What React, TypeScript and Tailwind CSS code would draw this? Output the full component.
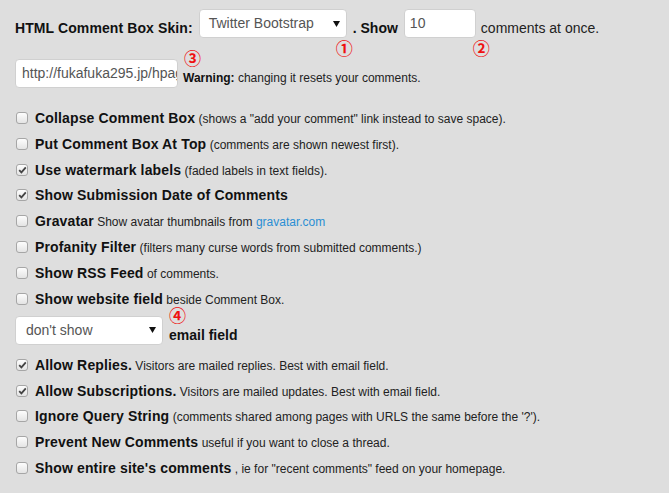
import React from "react";

const Check = ({ checked }: { checked?: boolean }) => (
  <span className="relative flex h-[12px] w-[12px] shrink-0 items-center justify-center rounded-[3px] border border-[#a6a6a6] bg-gradient-to-b from-[#fdfdfd] to-[#e4e4e4]">
    {checked && (
      <svg width="9" height="8" viewBox="0 0 9 8" className="block">
        <path d="M1.2 4.2 L3.4 6.4 L7.8 1.4" fill="none" stroke="#444" strokeWidth="1.8" />
      </svg>
    )}
  </span>
);

const Arrow = () => (
  <svg width="7" height="6" viewBox="0 0 7 6" className="block">
    <path d="M0 0 H7 L3.5 6 Z" fill="#111" />
  </svg>
);

const Circ = ({ n, className }: { n: string; className: string }) => (
  <span
    className={"absolute text-[17px] font-bold leading-none text-[#ee1111] " + className}
    style={{ fontFamily: '"Noto Sans CJK JP", "DejaVu Sans", sans-serif' }}
  >
    {n}
  </span>
);

type Row = { label: string; desc?: React.ReactNode; checked?: boolean };

const rows1: Row[] = [
  { label: "Collapse Comment Box", desc: '(shows a "add your comment" link instead to save space).' },
  { label: "Put Comment Box At Top", desc: "(comments are shown newest first)." },
  { label: "Use watermark labels", desc: "(faded labels in text fields).", checked: true },
  { label: "Show Submission Date of Comments", checked: true },
  {
    label: "Gravatar",
    desc: (
      <>
        Show avatar thumbnails from <span className="text-[#2a8fd4]">gravatar.com</span>
      </>
    ),
  },
  { label: "Profanity Filter", desc: "(filters many curse words from submitted comments.)" },
  { label: "Show RSS Feed", desc: "of comments." },
  { label: "Show website field", desc: "beside Comment Box." },
];

const rows2: Row[] = [
  { label: "Allow Replies.", desc: "Visitors are mailed replies. Best with email field.", checked: true },
  { label: "Allow Subscriptions.", desc: "Visitors are mailed updates. Best with email field.", checked: true },
  { label: "Ignore Query String", desc: "(comments shared among pages with URLS the same before the '?')." },
  { label: "Prevent New Comments", desc: "useful if you want to close a thread." },
  { label: "Show entire site's comments", desc: ', ie for "recent comments" feed on your homepage.' },
];

const RowItem = ({ r }: { r: Row }) => (
  <div className="flex h-[25.85px] items-center">
    <span className="ml-[1px]">
      <Check checked={r.checked} />
    </span>
    <span className="ml-[7px] whitespace-nowrap">
      <b className="text-[14px] font-bold tracking-[0.15px] text-[#111]">{r.label}</b>
      {r.desc && <span className="text-[12px] text-[#222]"> {r.desc}</span>}
    </span>
  </div>
);

export default function App() {
  return (
    <div
      className="relative min-h-[493px] w-[669px] bg-[#dedede] pl-[15px] pt-[9px] text-[#222]"
      style={{ fontFamily: '"Liberation Sans", Arial, sans-serif' }}
    >
      <div className="flex items-end">
        <b className="text-[14px] leading-[20px] tracking-[0.1px] text-[#111]">HTML Comment Box Skin:</b>
        <div className="relative ml-[6px] flex h-[29px] w-[148px] items-center justify-between rounded-[4px] border border-[#d0d0d0] bg-white pl-[9px] pr-[6px] text-[14px] text-[#555]">
          <span>Twitter Bootstrap</span>
          <Arrow />
          <Circ n="①" className="left-[136px] top-[29px]" />
        </div>
        <b className="ml-[6px] text-[14px] leading-[20px] text-[#111]">. Show</b>
        <div className="relative ml-[6px] flex h-[29px] w-[72px] items-center rounded-[4px] border border-[#d0d0d0] bg-white pl-[5px] text-[14px] text-[#555]">
          10
          <Circ n="②" className="left-[68px] top-[29px]" />
        </div>
        <span className="ml-[5px] text-[14px] leading-[20px]">comments at once.</span>
      </div>

      <div className="relative mt-[21px] flex items-end">
        <div className="flex h-[29px] w-[163px] items-center overflow-hidden rounded-[4px] border border-[#d0d0d0] bg-white pl-[6px] text-[14px] text-[#555] whitespace-nowrap">
          http://fukafuka295.jp/hpage/
        </div>
        <span className="mb-[2px] ml-[5px] text-[12px] leading-[16px]">
          <b className="text-[#111]">Warning:</b> changing it resets your comments.
        </span>
        <Circ n="③" className="left-[169px] top-[-10px]" />
      </div>

      <div className="mt-[17px]">
        {rows1.map((r) => (
          <RowItem key={r.label} r={r} />
        ))}
      </div>

      <div className="relative mt-[4px] flex items-end">
        <div className="flex h-[29px] w-[148px] items-center justify-between rounded-[4px] border border-[#d0d0d0] bg-white pl-[10px] pr-[6px] text-[14px] text-[#555]">
          <span>don't show</span>
          <Arrow />
        </div>
        <b className="ml-[6px] text-[14px] leading-[20px] text-[#111]">email field</b>
        <Circ n="④" className="left-[154px] top-[-10px]" />
      </div>

      <div className="mt-[7px]">
        {rows2.map((r) => (
          <RowItem key={r.label} r={r} />
        ))}
      </div>
    </div>
  );
}
